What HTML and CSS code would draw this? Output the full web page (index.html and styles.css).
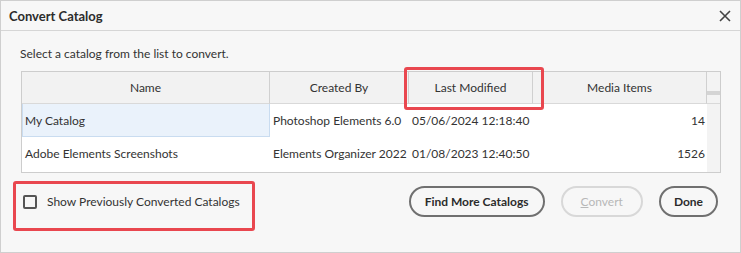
FILE: index.html
```html
<!DOCTYPE html>
<html lang="en">
<head>
  <meta charset="UTF-8" />
  <title>Convert Catalog</title>
  <link rel="stylesheet" href="styles.css">
</head>
<body>
  <div class="dialog">
    <div class="titlebar">
      <span class="title">Convert Catalog</span>
      <svg class="close" width="12" height="12" viewBox="0 0 12 12">
        <path d="M1 1 L11 11 M11 1 L1 11" stroke="#444" stroke-width="1.6" fill="none" />
      </svg>
    </div>

    <div class="content">
      <p class="intro">Select a catalog from the list to convert.</p>

      <div class="table">
        <div class="cell head">Name</div>
        <div class="cell head">Created By</div>
        <div class="cell head">Last Modified</div>
        <div class="cell head">Media Items</div>
        <div class="cell head scroll"><span class="thumb"></span></div>

        <div class="cell selected">My Catalog</div>
        <div class="cell">Photoshop Elements 6.0</div>
        <div class="cell">05/06/2024 12:18:40</div>
        <div class="cell num">14</div>
        <div class="cell scroll"></div>

        <div class="cell">Adobe Elements Screenshots</div>
        <div class="cell">Elements Organizer 2022</div>
        <div class="cell">01/08/2023 12:40:50</div>
        <div class="cell num">1526</div>
        <div class="cell scroll"></div>

        <div class="cell filler"></div>
        <div class="cell filler"></div>
        <div class="cell filler"></div>
        <div class="cell filler"></div>
        <div class="cell scroll filler"></div>
      </div>

      <div class="footer">
        <label class="check">
          <span class="box"></span>
          Show Previously Converted Catalogs
        </label>
        <div class="buttons">
          <button class="btn wide">Find More Catalogs</button>
          <button class="btn disabled"><u>C</u>onvert</button>
          <button class="btn">Done</button>
        </div>
      </div>
    </div>

    <div class="mark mark-column"></div>
    <div class="mark mark-check"></div>
  </div>
</body>
</html>
```
FILE: styles.css
```css
body {
  margin: 0;
  font-family: Lato, "Noto Sans", sans-serif;
  font-size: 12px;
  color: #333;
  background-color: #fff;
}

.dialog {
  position: relative;
  box-sizing: border-box;
  width: 741px;
  height: 253px;
  border: 1px solid #cfcfcf;
  background-color: #f7f7f7;
}

.titlebar {
  display: flex;
  align-items: center;
  justify-content: space-between;
  height: 29px;
  padding: 0 9px 0 8px;
  border-bottom: 1px solid #d6d6d6;
}

.title {
  font-size: 13px;
  font-weight: bold;
  color: #2c2c2c;
}

.close {
  margin-top: 1px;
}

.content {
  padding: 15px 19px 0 20px;
}

.intro {
  margin: 0 0 9px -1px;
  height: 16px;
  line-height: 16px;
}

.table {
  display: grid;
  grid-template-columns: 248px 139px 124px 174px 13px;
  grid-template-rows: 32px 33px 33px 2px;
  border: 1px solid #cdcdcd;
  background-color: #fff;
}

.cell {
  display: flex;
  align-items: center;
  padding: 0 3px;
  white-space: nowrap;
  overflow: hidden;
}

.head {
  justify-content: center;
  background-color: #f2f2f2;
  border-bottom: 1px solid #d9d9d9;
  border-right: 1px solid #d0d0d0;
}

.head.scroll {
  border-right: none;
  align-items: flex-start;
}

.scroll {
  padding: 0;
  background-color: #f3f3f3;
}

.thumb {
  display: block;
  width: 13px;
  height: 4px;
  margin-top: 19px;
  background-color: #d4d4d4;
}

.selected {
  background-color: #eaf2fb;
  border: 1px solid #c9dcf0;
  border-top: none;
  padding-left: 2px;
}

.num {
  justify-content: flex-end;
  padding-right: 2px;
}

.footer {
  display: flex;
  align-items: center;
  justify-content: space-between;
  margin-top: 13px;
}

.check {
  display: flex;
  align-items: center;
  gap: 10px;
  margin-left: 2px;
}

.box {
  box-sizing: border-box;
  width: 14px;
  height: 14px;
  border: 2px solid #555;
  border-radius: 2px;
}

.buttons {
  display: flex;
  gap: 16px;
  margin-right: 3px;
}

.btn {
  height: 31px;
  padding: 0 13px;
  font-family: inherit;
  font-size: 12px;
  font-weight: bold;
  color: #2c2c2c;
  background-color: transparent;
  border: 2px solid #707070;
  border-radius: 16px;
}

.btn.wide {
  padding: 0 14px;
}

.btn.disabled {
  padding: 0 18px;
  color: #b8b8b8;
  border-color: #d8d8d8;
  font-weight: normal;
}

.mark {
  position: absolute;
  border: 3px solid #e9474f;
  border-radius: 3px;
}

.mark-column {
  left: 403px;
  top: 66px;
  width: 134px;
  height: 37px;
}

.mark-check {
  left: 12px;
  top: 180px;
  width: 236px;
  height: 44px;
}
```
